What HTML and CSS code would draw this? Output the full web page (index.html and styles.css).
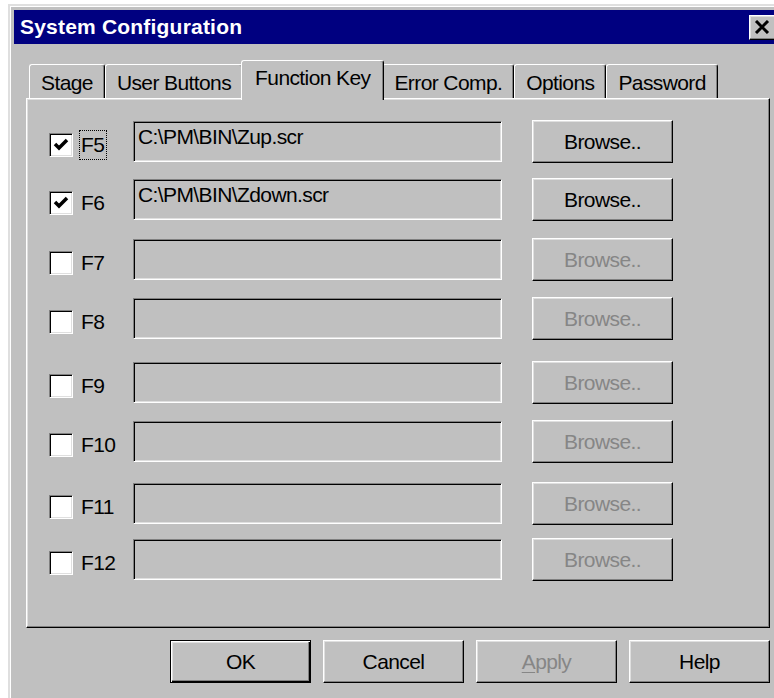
FILE: index.html
```html
<!DOCTYPE html>
<html lang="en">
<head>
<meta charset="utf-8">
<title>System Configuration</title>
<link rel="stylesheet" href="styles.css">
</head>
<body>
<div class="window">
  <div class="titlebar">
    <span class="title">System Configuration</span>
    <button class="close" type="button" aria-label="Close">
      <svg width="16" height="14" viewBox="0 0 16 14"><path d="M2 1 L14 13 M14 1 L2 13" stroke="#000" stroke-width="3" fill="none"/></svg>
    </button>
  </div>

  <div class="tabs">
    <div class="tab">Stage</div>
    <div class="tab">User Buttons</div>
    <div class="tab active">Function Key</div>
    <div class="tab">Error Comp.</div>
    <div class="tab">Options</div>
    <div class="tab">Password</div>
  </div>

  <div class="panel">
    <div class="row">
      <span class="check"><svg width="20" height="20" viewBox="0 0 20 20"><path d="M4 9 L8 13 L16 5" stroke="#000" stroke-width="3.5" fill="none"/></svg></span>
      <span class="key"><span class="focus">F5</span></span>
      <div class="field">C:\PM\BIN\Zup.scr</div>
      <button class="btn" type="button">Browse..</button>
    </div>
    <div class="row">
      <span class="check"><svg width="20" height="20" viewBox="0 0 20 20"><path d="M4 9 L8 13 L16 5" stroke="#000" stroke-width="3.5" fill="none"/></svg></span>
      <span class="key">F6</span>
      <div class="field">C:\PM\BIN\Zdown.scr</div>
      <button class="btn" type="button">Browse..</button>
    </div>
    <div class="row">
      <span class="check"></span>
      <span class="key">F7</span>
      <div class="field"></div>
      <button class="btn" type="button" disabled>Browse..</button>
    </div>
    <div class="row">
      <span class="check"></span>
      <span class="key">F8</span>
      <div class="field"></div>
      <button class="btn" type="button" disabled>Browse..</button>
    </div>
    <div class="row">
      <span class="check"></span>
      <span class="key">F9</span>
      <div class="field"></div>
      <button class="btn" type="button" disabled>Browse..</button>
    </div>
    <div class="row">
      <span class="check"></span>
      <span class="key">F10</span>
      <div class="field"></div>
      <button class="btn" type="button" disabled>Browse..</button>
    </div>
    <div class="row">
      <span class="check"></span>
      <span class="key">F11</span>
      <div class="field"></div>
      <button class="btn" type="button" disabled>Browse..</button>
    </div>
    <div class="row">
      <span class="check"></span>
      <span class="key">F12</span>
      <div class="field"></div>
      <button class="btn" type="button" disabled>Browse..</button>
    </div>
  </div>

  <div class="actions">
    <button class="btn default" type="button">OK</button>
    <button class="btn" type="button">Cancel</button>
    <button class="btn" type="button" disabled><u>A</u>pply</button>
    <button class="btn" type="button">Help</button>
  </div>
</div>
</body>
</html>
```

FILE: styles.css
```css
* {
  box-sizing: border-box;
}

html,
body {
  margin: 0;
}

body {
  width: 774px;
  height: 698px;
  overflow: hidden;
  background: #ffffff;
  font-family: "Liberation Sans", Arial, sans-serif;
  font-size: 21px;
  letter-spacing: -0.6px;
  color: #000;
}

/* dialog frame */
.window {
  margin: 4px 0 0 8px;
  width: 800px;
  height: 720px;
  padding: 4px 0 0 4px;
  background: #c0c0c0;
  border: 2px solid;
  border-color: #dfdfdf #000 #000 #dfdfdf;
  box-shadow: inset 1px 1px #fff, inset -1px -1px #808080;
}

.titlebar {
  display: flex;
  align-items: center;
  height: 34px;
  padding-left: 6px;
  background: #000080;
}

.title {
  color: #fff;
  font-weight: bold;
  font-size: 21px;
  letter-spacing: 0.2px;
}

.close {
  margin-left: auto;
  margin-right: 29px;
  width: 28px;
  height: 25px;
  padding: 0 0 0 4px;
  display: flex;
  align-items: center;
  justify-content: flex-start;
  background: #c0c0c0;
  border: 1px solid;
  border-color: #fff #000 #000 #fff;
  box-shadow: inset -1px -1px #808080, inset 1px 1px #dfdfdf;
}

/* tab strip */
.tabs {
  display: flex;
  align-items: flex-end;
  height: 38px;
  margin: 16px 0 0 12px;
  padding-left: 3px;
}

.tab {
  height: 34px;
  padding: 6px 11px 0;
  line-height: 24px;
  white-space: nowrap;
  background: #c0c0c0;
  border-top: 1px solid #fff;
  border-left: 1px solid #fff;
  border-right: 1px solid #000;
  border-radius: 3px 3px 0 0;
  box-shadow: inset -1px 0 #808080;
}

.tab.active {
  position: relative;
  z-index: 1;
  height: 40px;
  margin: 0 -2px -2px;
  padding: 5px 13px 0;
}

/* page body */
.panel {
  display: flex;
  flex-direction: column;
  gap: 16px;
  margin-left: 12px;
  width: 744px;
  height: 530px;
  padding: 21px 0 0 22px;
  border: 1px solid;
  border-color: #fff #000 #000 #fff;
  box-shadow: inset -1px -1px #808080, inset 1px 1px #dfdfdf;
}

.row {
  display: flex;
  align-items: center;
  height: 43px;
}

.row:nth-child(2) { margin-top: -1px; }
.row:nth-child(3) { margin-top: 1px; }
.row:nth-child(5) { margin-top: 5px; }
.row:nth-child(7) { margin-top: 3px; }
.row:nth-child(8) { margin-top: -3px; }

.check {
  flex: none;
  width: 24px;
  height: 24px;
  margin-top: 6px;
  background: #fff;
  border: 1px solid;
  border-color: #808080 #fff #fff #808080;
  box-shadow: inset 1px 1px #000, inset -1px -1px #dfdfdf;
  display: flex;
  align-items: center;
  justify-content: center;
}

.key {
  flex: none;
  width: 60px;
  margin-top: 6px;
  padding-left: 8px;
  line-height: 28px;
}

.focus {
  display: inline-block;
  padding: 0 2px 0 1px;
  margin-left: -1px;
  outline: 1px dotted #000;
  line-height: 28px;
}

.field {
  flex: none;
  width: 369px;
  height: 41px;
  margin-right: 30px;
  padding: 3px 4px;
  line-height: 24px;
  white-space: nowrap;
  background: #c0c0c0;
  border: 1px solid;
  border-color: #808080 #fff #fff #808080;
  box-shadow: inset 1px 1px #000, inset -1px -1px #dfdfdf;
}

.btn {
  flex: none;
  width: 141px;
  height: 43px;
  padding: 0;
  font: inherit;
  letter-spacing: -0.6px;
  color: #000;
  background: #c0c0c0;
  border: 1px solid;
  border-color: #fff #000 #000 #fff;
  box-shadow: inset -1px -1px #808080, inset 1px 1px #dfdfdf;
}

.btn:disabled {
  color: #868686;
}

.btn u {
  text-decoration-thickness: 1px;
  text-underline-offset: 3px;
}

.btn.default {
  border-color: #000;
  box-shadow: inset 1px 1px #fff, inset -1px -1px #000, inset -2px -2px #808080, inset 2px 2px #dfdfdf;
}

/* dialog buttons */
.actions {
  display: flex;
  justify-content: flex-end;
  gap: 12px;
  width: 744px;
  margin: 12px 0 0 12px;
}
```
